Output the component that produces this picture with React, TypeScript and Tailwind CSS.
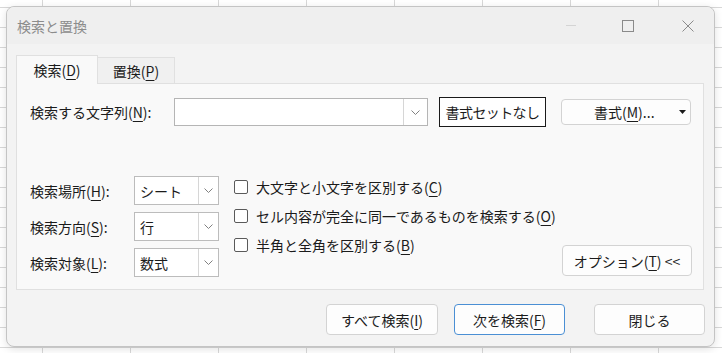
import React from "react";

const U = ({ c }: { c: string }) => (
  <span className="underline underline-offset-[3px] decoration-1">{c}</span>
);

const Chevron = () => (
  <svg width="9" height="5" viewBox="0 0 9 5">
    <path d="M0.5 0.5 L4.5 4.5 L8.5 0.5" fill="none" stroke="#808080" strokeWidth="1" />
  </svg>
);

const Select = ({ value }: { value: string }) => (
  <div className="flex h-[29px] w-[85px] border border-[#bcbcbc] bg-white">
    <div className="flex flex-1 items-center pl-[5px]">{value}</div>
    <div className="flex w-[20px] items-center justify-center border-l border-[#d6d6d6]">
      <Chevron />
    </div>
  </div>
);

const Check = ({ children }: { children: React.ReactNode }) => (
  <div className="flex h-[29px] items-center">
    <div className="h-[14px] w-[14px] rounded-[2px] border border-[#5a5a5a] bg-white" />
    <span className="ml-[8px]">{children}</span>
  </div>
);

const Btn = ({ children, w, primary }: { children: React.ReactNode; w: string; primary?: boolean }) => (
  <button
    className={`flex h-[31px] items-center justify-center rounded-[4px] border bg-[#fdfdfd] ${w} ${
      primary ? "border-[#4a8fd4]" : "border-[#d3d3d3]"
    }`}
  >
    {children}
  </button>
);

export default function App() {
  return (
    <div className="h-[353px] w-[722px] overflow-hidden bg-[#ffffff] bg-[linear-gradient(to_right,#d8d8d8_1px,transparent_1px),linear-gradient(to_bottom,#d8d8d8_1px,transparent_1px)] bg-[size:88px_20px] bg-[position:42px_7px] pl-[6px] pt-[6px] font-['Yu_Gothic_UI','Noto_Sans_CJK_JP',sans-serif] text-[14px] leading-none text-[#1b1b1b]">
      <div className="flex h-[341px] w-[709px] flex-col rounded-[8px] border border-[#c4c4c4] bg-[#f3f3f3] shadow-[0_2px_8px_rgba(0,0,0,0.12)]">
        {/* Title bar */}
        <div className="flex h-[37px] items-center rounded-t-[8px] bg-[#efefef] pl-[10px]">
          <span className="text-[#8c8c8c]">検索と置換</span>
          <div className="ml-auto flex items-center pr-[20px]">
            <div className="h-px w-[10px] bg-[#d4d4d4]" />
            <div className="ml-[46px] h-[12px] w-[12px] border border-[#8a8a8a]" />
            <svg className="ml-[48px]" width="12" height="12" viewBox="0 0 12 12">
              <path d="M0.5 0.5 L11.5 11.5 M11.5 0.5 L0.5 11.5" stroke="#8a8a8a" strokeWidth="1" />
            </svg>
          </div>
        </div>

        {/* Body */}
        <div className="flex flex-1 flex-col px-[9px] pt-[11px]">
          {/* Tabs */}
          <div className="flex items-end">
            <div className="relative z-10 -mb-px flex h-[29px] w-[82px] items-center justify-center border border-b-0 border-[#e0e0e0] bg-[#f9f9f9]">
              検索(<U c="D" />)
            </div>
            <div className="flex h-[26px] w-[77px] items-center justify-center border border-l-0 border-b-0 border-[#e0e0e0] bg-[#f0f0f0]">
              置換(<U c="P" />)
            </div>
          </div>

          {/* Panel */}
          <div className="flex h-[207px] w-[688px] flex-col border border-[#e0e0e0] bg-[#f9f9f9] pl-[13px] pr-[11px] pt-[13px]">
            <div className="flex h-[30px] items-center">
              <div className="w-[144px]">
                検索する文字列(<U c="N" />):
              </div>
              <div className="flex h-[28px] w-[254px] border border-[#b5b5b5] bg-white">
                <div className="flex-1" />
                <div className="flex w-[24px] items-center justify-center border-l border-[#d6d6d6]">
                  <Chevron />
                </div>
              </div>
              <button className="ml-[11px] flex h-[30px] w-[107px] items-center justify-center border border-[#1a1a1a] bg-white tracking-[-0.6px]">
                書式セットなし
              </button>
              <button className="ml-[15px] flex h-[26px] w-[130px] items-center rounded-[4px] border border-[#d3d3d3] bg-[#fdfdfd] pl-[32px]">
                書式(<U c="M" />)...
                <svg className="ml-auto mr-[4px]" width="7" height="4" viewBox="0 0 7 4">
                  <path d="M0 0 L7 0 L3.5 4 Z" fill="#1b1b1b" />
                </svg>
              </button>
            </div>

            <div className="mt-[49px] flex">
              <div className="flex flex-col gap-[7px]">
                {[
                  ["検索場所", "H", "シート"],
                  ["検索方向", "S", "行"],
                  ["検索対象", "L", "数式"],
                ].map(([l, k, v]) => (
                  <div key={k} className="flex items-center">
                    <div className="w-[104px]">
                      {l}(<U c={k} />):
                    </div>
                    <Select value={v} />
                  </div>
                ))}
              </div>

              <div className="-mt-[4px] ml-[15px] flex flex-col">
                <Check>
                  大文字と小文字を区別する(<U c="C" />)
                </Check>
                <Check>
                  セル内容が完全に同一であるものを検索する(<U c="O" />)
                </Check>
                <Check>
                  半角と全角を区別する(<U c="B" />)
                </Check>
              </div>

              <div className="mb-[1px] ml-auto self-end">
                <Btn w="w-[130px]">
                  オプション(<U c="T" />) &lt;&lt;
                </Btn>
              </div>
            </div>
          </div>

          {/* Bottom buttons */}
          <div className="mt-[14px] flex justify-end">
            <Btn w="w-[112px]">
              すべて検索(<U c="I" />)
            </Btn>
            <div className="ml-[16px]">
              <Btn w="w-[111px]" primary>
                次を検索(<U c="F" />)
              </Btn>
            </div>
            <div className="ml-[29px]">
              <Btn w="w-[111px]">閉じる</Btn>
            </div>
          </div>
        </div>
      </div>
    </div>
  );
}
